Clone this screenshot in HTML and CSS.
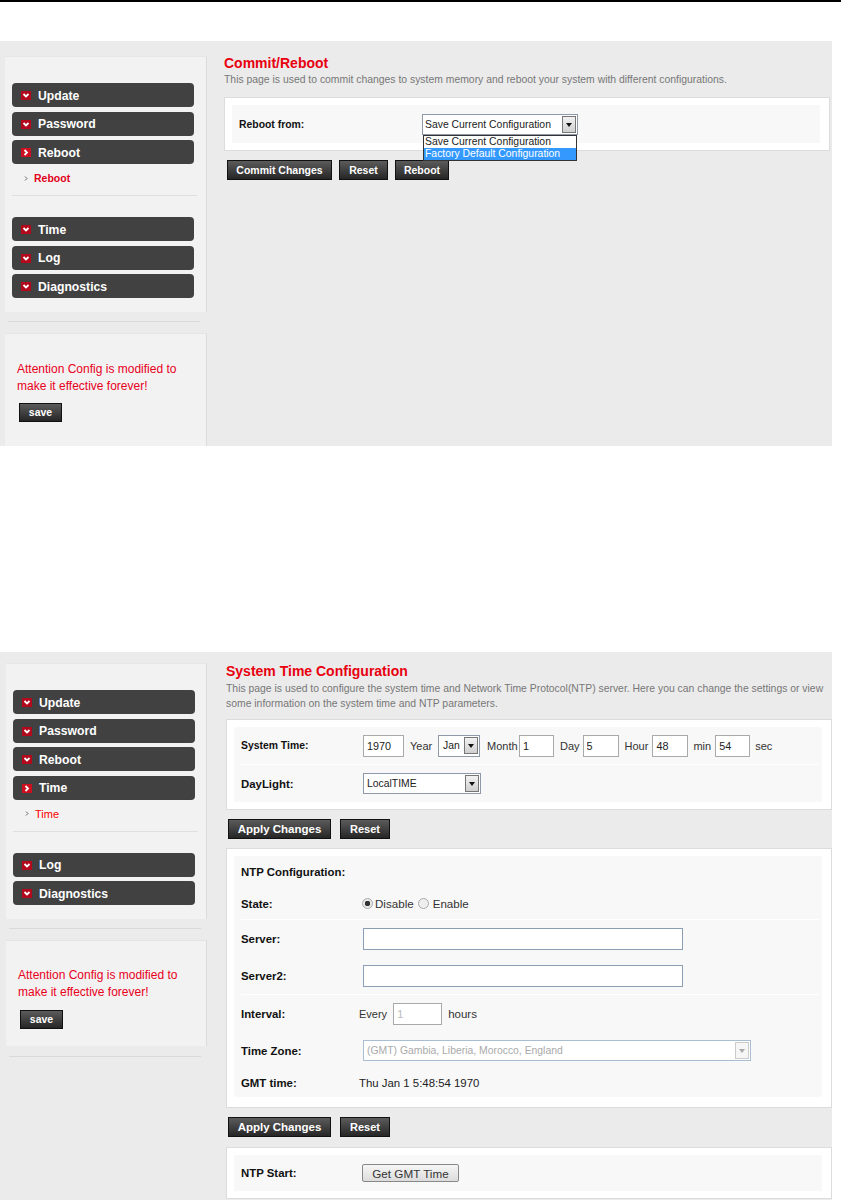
FILE: index.html
```html
<!DOCTYPE html>
<html lang="en">
<head>
<meta charset="utf-8">
<title>Router configuration manual page</title>
<link rel="stylesheet" href="styles.css">
</head>
<body>
<div class="top-rule"></div>

<section class="panel panel-reboot">
  <aside class="sidebar">
    <div class="card">
      <div class="nav-group">
        <a class="nav"><svg class="ico" viewBox="0 0 10 9"><rect width="10" height="9" fill="#b20a1c"/><path d="M2.5 3L5 5.5 7.5 3" fill="none" stroke="#fff" stroke-width="1.8"/></svg>Update</a>
        <a class="nav"><svg class="ico" viewBox="0 0 10 9"><rect width="10" height="9" fill="#b20a1c"/><path d="M2.5 3L5 5.5 7.5 3" fill="none" stroke="#fff" stroke-width="1.8"/></svg>Password</a>
        <a class="nav"><svg class="ico" viewBox="0 0 10 9"><rect width="10" height="9" fill="#cc1020"/><path d="M3.5 2L6 4.5 3.5 7" fill="none" stroke="#fff" stroke-width="1.8"/></svg>Reboot</a>
        <div class="sub"><svg class="sub-ico" viewBox="0 0 4 5"><path d="M1 .5l2 2-2 2" fill="none" stroke="#666" stroke-width="1"/></svg><span>Reboot</span></div>
      </div>
      <div class="nav-group">
        <a class="nav"><svg class="ico" viewBox="0 0 10 9"><rect width="10" height="9" fill="#b20a1c"/><path d="M2.5 3L5 5.5 7.5 3" fill="none" stroke="#fff" stroke-width="1.8"/></svg>Time</a>
        <a class="nav"><svg class="ico" viewBox="0 0 10 9"><rect width="10" height="9" fill="#b20a1c"/><path d="M2.5 3L5 5.5 7.5 3" fill="none" stroke="#fff" stroke-width="1.8"/></svg>Log</a>
        <a class="nav"><svg class="ico" viewBox="0 0 10 9"><rect width="10" height="9" fill="#b20a1c"/><path d="M2.5 3L5 5.5 7.5 3" fill="none" stroke="#fff" stroke-width="1.8"/></svg>Diagnostics</a>
      </div>
    </div>
    <div class="side-rule"></div>
    <div class="card card-note">
      <p class="note">Attention Config is modified to make it effective forever!</p>
      <button class="btn btn-save">save</button>
    </div>
  </aside>
  <main class="main">
    <h1 class="title">Commit/Reboot</h1>
    <p class="desc">This page is used to commit changes to system memory and reboot your system with different configurations.</p>
    <div class="box">
      <div class="inner">
        <div class="row row-38">
          <span class="label label-small">Reboot from:</span>
          <div class="sel-wrap">
            <div class="sel sel-reboot"><span>Save Current Configuration</span><i class="sel-arrow"></i></div>
            <ul class="dropdown">
              <li>Save Current Configuration</li>
              <li class="picked">Factory Default Configuration</li>
            </ul>
          </div>
        </div>
      </div>
    </div>
    <div class="btn-bar btn-bar-tight">
      <button class="btn btn-commit">Commit Changes</button>
      <button class="btn btn-reset-sm">Reset</button>
      <button class="btn btn-reboot">Reboot</button>
    </div>
  </main>
</section>

<section class="panel panel-time">
  <aside class="sidebar">
    <div class="card">
      <div class="nav-group">
        <a class="nav"><svg class="ico" viewBox="0 0 10 9"><rect width="10" height="9" fill="#b20a1c"/><path d="M2.5 3L5 5.5 7.5 3" fill="none" stroke="#fff" stroke-width="1.8"/></svg>Update</a>
        <a class="nav"><svg class="ico" viewBox="0 0 10 9"><rect width="10" height="9" fill="#b20a1c"/><path d="M2.5 3L5 5.5 7.5 3" fill="none" stroke="#fff" stroke-width="1.8"/></svg>Password</a>
        <a class="nav"><svg class="ico" viewBox="0 0 10 9"><rect width="10" height="9" fill="#b20a1c"/><path d="M2.5 3L5 5.5 7.5 3" fill="none" stroke="#fff" stroke-width="1.8"/></svg>Reboot</a>
        <a class="nav"><svg class="ico" viewBox="0 0 10 9"><rect width="10" height="9" fill="#cc1020"/><path d="M3.5 2L6 4.5 3.5 7" fill="none" stroke="#fff" stroke-width="1.8"/></svg>Time</a>
        <div class="sub"><svg class="sub-ico" viewBox="0 0 4 5"><path d="M1 .5l2 2-2 2" fill="none" stroke="#666" stroke-width="1"/></svg><span class="sub-plain">Time</span></div>
      </div>
      <div class="nav-group">
        <a class="nav"><svg class="ico" viewBox="0 0 10 9"><rect width="10" height="9" fill="#b20a1c"/><path d="M2.5 3L5 5.5 7.5 3" fill="none" stroke="#fff" stroke-width="1.8"/></svg>Log</a>
        <a class="nav"><svg class="ico" viewBox="0 0 10 9"><rect width="10" height="9" fill="#b20a1c"/><path d="M2.5 3L5 5.5 7.5 3" fill="none" stroke="#fff" stroke-width="1.8"/></svg>Diagnostics</a>
      </div>
    </div>
    <div class="side-rule"></div>
    <div class="card card-note">
      <p class="note">Attention Config is modified to make it effective forever!</p>
      <button class="btn btn-save">save</button>
    </div>
    <div class="side-rule side-rule-end"></div>
  </aside>
  <main class="main">
    <h1 class="title">System Time Configuration</h1>
    <p class="desc">This page is used to configure the system time and Network Time Protocol(NTP) server. Here you can change the settings or view some information on the system time and NTP parameters.</p>
    <div class="box">
      <div class="inner">
        <div class="row row-38 row-line">
          <span class="label label-small">System Time:</span>
          <input class="field f-year" value="1970"><span class="unit u-year">Year</span>
          <div class="sel sel-month"><span>Jan</span><i class="sel-arrow"></i></div><span class="unit u-month">Month</span>
          <input class="field f-day" value="1"><span class="unit u-day">Day</span>
          <input class="field f-hour" value="5"><span class="unit u-hour">Hour</span>
          <input class="field f-min" value="48"><span class="unit u-min">min</span>
          <input class="field f-sec" value="54"><span class="unit u-sec">sec</span>
        </div>
        <div class="row">
          <span class="label">DayLight:</span>
          <div class="sel sel-day"><span>LocalTIME</span><i class="sel-arrow"></i></div>
        </div>
      </div>
    </div>
    <div class="btn-bar">
      <button class="btn btn-apply">Apply Changes</button>
      <button class="btn btn-reset">Reset</button>
    </div>
    <div class="box">
      <div class="inner">
        <div class="row row-32"><span class="label">NTP Configuration:</span></div>
        <div class="row row-32 row-line">
          <span class="label">State:</span>
          <input class="radio radio-on" type="radio" name="state" checked><span class="radio-text">Disable</span>
          <input class="radio" type="radio" name="state"><span class="radio-text">Enable</span>
        </div>
        <div class="row row-38">
          <span class="label">Server:</span>
          <input class="field field-blue f-server">
        </div>
        <div class="row row-line">
          <span class="label">Server2:</span>
          <input class="field field-blue f-server">
        </div>
        <div class="row">
          <span class="label">Interval:</span>
          <span class="every">Every</span><input class="field f-int" value="1" disabled><span class="unit u-hours">hours</span>
        </div>
        <div class="row">
          <span class="label">Time Zone:</span>
          <div class="sel sel-zone"><span>(GMT) Gambia, Liberia, Morocco, England</span><i class="sel-arrow sel-arrow-off"></i></div>
        </div>
        <div class="row row-28">
          <span class="label">GMT time:</span>
          <span class="gmt">Thu Jan 1 5:48:54 1970</span>
        </div>
      </div>
    </div>
    <div class="btn-bar btn-bar-lower">
      <button class="btn btn-apply">Apply Changes</button>
      <button class="btn btn-reset">Reset</button>
    </div>
    <div class="box">
      <div class="inner">
        <div class="row row-36">
          <span class="label">NTP Start:</span>
          <button class="btn-light">Get GMT Time</button>
        </div>
      </div>
    </div>
  </main>
</section>
</body>
</html>
```
FILE: styles.css
```css
* { box-sizing: border-box; }
html, body { margin: 0; padding: 0; background: #fff; }
body { font-family: "Liberation Sans", Arial, sans-serif; font-size: 11px; color: #111; }

.top-rule { height: 2px; background: #000; }

.panel { display: flex; width: 832px; background: #ebebeb; overflow: hidden; }
.panel-reboot { height: 405px; margin-top: 39px; }
.panel-time { height: 548px; margin-top: 206px; }

.sidebar { display: flex; flex-direction: column; flex: 0 0 222px; padding-left: 5px; }
.panel-reboot .sidebar { padding-top: 15px; }
.panel-time .sidebar { padding-top: 11px; padding-left: 6px; }

.card { width: 202px; padding: 26px 0 14px 7px; background: #f2f2f2; border-right: 1px solid #dcdcdc; border-top: 1px solid #e6e6e6; }
.panel-time .card { width: 201px; }
.card-note { padding: 26px 10px 17px 12px; border-top: 1px solid #e4e4e4; }
.panel-reboot .card-note { flex: 1; padding-top: 27px; }

.nav-group { display: flex; flex-direction: column; gap: 4.5px; }
.nav-group + .nav-group { margin-top: 21px; }
.nav { display: flex; align-items: center; width: 182px; height: 24px; padding: 1px 0 0 9px; background: #414141; border-radius: 4px; color: #fff; font-size: 12.2px; font-weight: bold; }
.ico { width: 10px; height: 9px; margin-right: 7px; flex: none; }

.sub { display: flex; align-items: center; box-sizing: content-box; width: 173px; height: 19px; padding: 0 0 7.5px 12px; border-bottom: 1px solid #dfdfdf; color: #e2001a; font-size: 10.5px; font-weight: bold; }
.sub-ico { width: 4px; height: 5px; margin-right: 6px; }
.sub-plain { font-weight: normal; font-size: 11px; color: #f00; }

.side-rule { flex: none; width: 192px; height: 1px; margin: 9px 0 11px 3px; background: #d9d9d9; }
.side-rule-end { margin-top: 10px; }

.note { margin: 0 0 8.5px; color: #e8001c; font-size: 12px; line-height: 17px; }
.panel-reboot .note { margin-bottom: 7.5px; }

.btn { display: block; height: 20px; padding: 0; border: 1px solid #111; background: linear-gradient(#5b5b5b, #262626); color: #fff; font: bold 10.5px "Liberation Sans", Arial, sans-serif; text-align: center; }
.btn-save { width: 43px; height: 19px; margin-left: 2px; }
.btn-commit { width: 105px; }
.btn-reset-sm { width: 49px; }
.btn-reboot { width: 54px; }
.btn-apply { width: 103px; font-size: 11.5px; }
.btn-reset { width: 50px; font-size: 11px; }

.main { flex: 0 0 610px; }
.panel-reboot .main { padding: 14px 2px 0 2px; }
.panel-time .main { padding: 11px 0 0 4px; }

.title { margin: 0; color: #e8000f; font-size: 14px; line-height: 16px; font-weight: bold; }
.desc { margin: 0 0 9.5px; padding-top: 1px; width: 606px; color: #777; font-size: 10.4px; line-height: 15px; }
.panel-time .desc { margin-bottom: 8px; padding-top: 2px; }

.box { width: 606px; padding: 7px; background: #fff; border: 1px solid #dcdcdc; }
.inner { margin: 0 2px 0 0; padding: 0 3px 0 7px; background: #f8f8f8; }
.row-28 { margin-bottom: 3px; }

.row { display: flex; align-items: center; height: 37px; }
.row-38 { height: 38px; }
.row-36 { height: 36px; }
.row-32 { height: 32px; }
.row-28 { height: 28px; }
.row-line { border-bottom: 1px solid #fff; }
.panel-reboot .row { padding-top: 1px; }

.label { flex: 0 0 122px; color: #111; font-weight: bold; font-size: 11.4px; white-space: nowrap; }
.label-small { font-size: 10.4px; }
.panel-reboot .label { flex-basis: 183px; }

.field { height: 22px; padding: 0 3px; background: #fff; border: 1px solid #a9a9a9; color: #222; font: 10.8px "Liberation Sans", Arial, sans-serif; }
.field-blue { border-color: #8b9eb4; }
.f-year { width: 41px; }
.f-day { width: 35px; }
.f-hour { width: 36px; }
.f-min { width: 36px; }
.f-sec { width: 35px; }
.f-server { width: 320px; }
.f-int { width: 49px; color: #bbb; background: #fff; }

.unit { color: #333; font-size: 11px; }
.u-year { width: 22px; margin: 0 6px; }
.u-month { width: 27px; margin: 0 5px 0 7px; }
.u-day { margin: 0 3px 0 6px; }
.u-hour { margin: 0 4px 0 6px; }
.u-min { margin: 0 4px 0 5px; }
.u-sec { margin-left: 5px; }
.u-hours { margin-left: 6px; font-size: 11.5px; }

.sel-wrap { position: relative; }
.sel { display: flex; align-items: center; justify-content: space-between; height: 21px; padding: 0 1px 0 3px; background: #fff; border: 1px solid #8e9aa8; color: #222; font-size: 10.4px; }
.sel-arrow { position: relative; display: block; flex: none; width: 14px; height: 17px; background: linear-gradient(#f2f2f2, #cfcfcf); border: 1px solid #777; }
.sel-arrow::after { content: ""; position: absolute; left: 3px; top: 6px; border: 3px solid transparent; border-top: 4px solid #111; border-bottom: 0; }
.sel-arrow-off { border-color: #ccc; background: #f6f6f6; }
.sel-arrow-off::after { border-top-color: #aaa; }
.sel-reboot { width: 156px; padding-left: 2px; }
.sel-month { width: 42px; height: 22px; padding-left: 4px; }
.sel-day { width: 118px; }
.sel-zone { width: 388px; color: #aaa; border-color: #a9bdd3; }

.dropdown { position: absolute; left: 1px; top: 21px; width: 154px; margin: 0; padding: 0; list-style: none; background: #fff; border: 1px solid #333; font-size: 10.4px; line-height: 12px; color: #222; }
.dropdown li { padding-left: 1px; white-space: nowrap; }
.dropdown .picked { background: #3399ff; color: #fff; }

.btn-bar { display: flex; gap: 9px; margin: 9px 0 9px 2px; }
.btn-bar-tight { gap: 7px; margin-left: 3px; }
.btn-bar-lower { margin-bottom: 10px; }

.radio { appearance: none; width: 11px; height: 11px; margin: 0 4px 0 -1px; border: 1px solid #aaa; border-radius: 50%; background: #eee; }
.radio-on { margin-right: 2px; background: radial-gradient(circle, #333 0 2.5px, #e8e8e8 3px); }
.radio-text { margin-right: 5px; color: #333; font-size: 11.6px; }

.every { margin: 0 6px 0 -4px; color: #333; }
.gmt { margin-left: -4px; color: #222; font-size: 11.4px; }

.btn-light { width: 97px; height: 18px; margin-left: -1px; padding: 0; border: 1px solid #888; border-radius: 2px; background: linear-gradient(#f6f6f6, #dcdcdc); color: #333; font: 11.7px "Liberation Sans", Arial, sans-serif; }
```
